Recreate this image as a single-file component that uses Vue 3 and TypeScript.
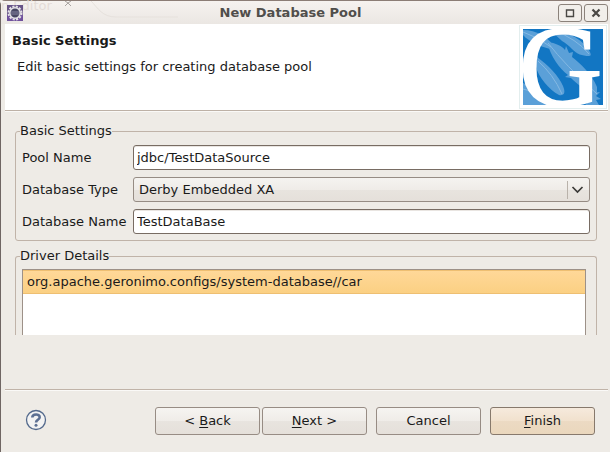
<script setup lang="ts">
import { ref } from 'vue'

const poolName = ref('jdbc/TestDataSource')
const databaseType = ref('Derby Embedded XA')
const databaseName = ref('TestDataBase')
const drivers = ref<string[]>(['org.apache.geronimo.configs/system-database//car'])
const selected = ref(0)
</script>

<template>
  <main class="dialog">
    <div class="titlebar">
      <span class="backdrop" aria-hidden="true">
        <span>n Editor</span>
        <svg width="120" height="18" viewBox="0 0 120 18" fill="none">
          <path d="M7 0l3 2 3-2M7 5l3-3 3 3" stroke="#a8a3a0" />
          <path d="M33 0C40 7 44 16 58 16H120" stroke="#e6e1dc" />
        </svg>
      </span>
      <svg class="app-icon" width="16" height="16" viewBox="0 0 16 16">
        <rect width="16" height="16" fill="#675387" />
        <rect y="10" width="16" height="6" fill="#70519c" />
        <circle cx="8" cy="8" r="6.5" fill="none" stroke="#e4e2e6" stroke-width="2" stroke-dasharray="2.1 1.3" />
        <circle cx="8" cy="8" r="5.2" fill="#484663" stroke="#e4e2e6" stroke-width="1.5" />
        <path d="M4 7h8M4 9h8" stroke="#8583a0" />
      </svg>
      <h1>New Database Pool</h1>
      <div class="window-buttons">
        <button type="button" aria-label="Maximize">
          <svg width="10" height="10" viewBox="0 0 10 10"><path d="M1.500 2H8.500V8.500H1.500Z" fill="none" stroke="#4a4845" stroke-width="1.400" /></svg>
        </button>
        <button type="button" aria-label="Close">
          <svg width="10" height="10" viewBox="0 0 10 10"><path d="M1.500 1.500L8.500 8.500M8.500 1.500L1.500 8.500" stroke="#4a4845" stroke-width="2.200" /></svg>
        </button>
      </div>
    </div>

    <header class="banner">
      <div class="intro">
        <h2>Basic Settings</h2>
        <p>Edit basic settings for creating database pool</p>
      </div>
      <svg class="logo" width="88" height="84" viewBox="0 0 88 84">
        <rect x=".5" y=".5" width="87" height="83" fill="#fff" stroke="#e3eeee" />
        <rect x="4" y="4" width="80" height="76" fill="#1276c3" />
        <g fill="#5ba0d8">
          <path d="M4 5C18 5 28 12 34 20L31 24C20 21 9 16 4 10Z" />
          <path d="M31 4C47 6 59 12 68 22C72 28 73 31 70 31C63 31 58 29 53 24C50 21 47 18 43 16C38 11 34 9 31 4Z" />
          <path d="M28 17C37 18 43 21 46 25L47 21L50 28L54 27L53 32C61 38 73 49 78 62L78 70C65 65 57 58 52 53L46 52L49 50C40 43 32 32 28 17Z" />
          <path d="M18 32C29 40 40 51 44 61C47 68 45 71 40 70C30 65 19 51 17 42Z" />
          <path d="M4 58C18 62 27 70 35 80H4Z" />
          <path d="M73 68L81 67L77 71L82 74L77 75L80 80H66L72 75L69 72Z" />
        </g>
        <path d="M4 7Q19 12 32 22M34 5Q58 14 70 29M29 18Q46 40 78 69M19 36Q34 49 43 69M4 64Q20 67 32 80" fill="none" stroke="#85b9e3" />
        <text x="0" y="80" class="letter">G</text>
      </svg>
    </header>

    <form class="body" @submit.prevent>
      <fieldset class="group settings">
        <legend>Basic Settings</legend>
        <label for="pool">Pool Name</label>
        <input id="pool" v-model="poolName" type="text" />
        <label for="type">Database Type</label>
        <div class="combo">
          <select id="type" v-model="databaseType">
            <option>Derby Embedded XA</option>
          </select>
          <svg width="24" height="18" viewBox="0 0 24 18" fill="none">
            <path d="M1.500 0V18" stroke="#b9b2aa" />
            <path d="M6.500 6L11.500 11L16.500 6" stroke="#3c3b38" stroke-width="1.700" />
          </svg>
        </div>
        <label for="name">Database Name</label>
        <input id="name" v-model="databaseName" type="text" />
      </fieldset>

      <fieldset class="group drivers">
        <legend>Driver Details</legend>
        <ul class="list" role="listbox" aria-label="Driver Details">
          <li
            v-for="(driver, i) in drivers"
            :key="driver"
            role="option"
            :aria-selected="i === selected"
            :class="{ selected: i === selected }"
            @click="selected = i"
          >{{ driver }}</li>
        </ul>
      </fieldset>
    </form>

    <footer class="actions">
      <button class="help" type="button" aria-label="Help">
        <svg width="22" height="22" viewBox="0 0 22 22">
          <circle cx="11" cy="11" r="9.500" fill="#f3f3f3" stroke="#53698c" stroke-width="1.300" />
          <path d="M7.300 8.600C7.300 4.600 14.700 4.400 14.700 8.200C14.700 10.700 11 10.800 11 13.400" fill="none" stroke="#5d7093" stroke-width="2.600" />
          <circle cx="11" cy="16.300" r="1.500" fill="#5d7093" />
        </svg>
      </button>
      <div class="nav">
        <button class="push" type="button">&lt; <u>B</u>ack</button>
        <button class="push" type="button"><u>N</u>ext &gt;</button>
      </div>
      <button class="push" type="button">Cancel</button>
      <button class="push primary" type="button"><u>F</u>inish</button>
    </footer>
  </main>
</template>

<style>
body {
  background: #eeebe6;
}
</style>

<style scoped>
.dialog {
  box-sizing: border-box;
  display: flex;
  flex-direction: column;
  min-height: 100vh;
  padding: 0 2px 0 4px;
  border-top: 1px solid #8c7d76;
  border-left: 1px solid #6f6663;
  border-top-left-radius: 5px;
  background: #eeebe6;
  color: #1a1a1a;
  font: 13px/18px "DejaVu Sans", sans-serif;
}

h1,
h2,
p,
ul {
  margin: 0;
  padding: 0;
}

button,
input,
select {
  box-sizing: border-box;
  font: inherit;
  color: inherit;
}

.titlebar {
  position: relative;
  display: flex;
  align-items: center;
  height: 23px;
  margin: 0 -2px 0 -4px;
  padding: 0 2px 0 6px;
  background: linear-gradient(#f6f2ef, #ebe7e3);
}

.backdrop {
  position: absolute;
  top: 0;
  left: 0;
  display: flex;
  height: 18px;
  color: #e4dcd8;
  line-height: 10px;
}

.backdrop span {
  width: 57px;
}

.app-icon {
  position: relative;
}

h1 {
  flex: 1;
  color: #504e4b;
  font-size: 13px;
  line-height: 20px;
  text-align: center;
}

.window-buttons {
  display: flex;
  gap: 2px;
}

.window-buttons button {
  display: flex;
  align-items: center;
  justify-content: center;
  width: 24px;
  height: 18px;
  padding: 0;
  border: 1px solid #8b827b;
  border-radius: 3px;
  background: #f1eeea;
}

.banner {
  display: flex;
  justify-content: space-between;
  height: 86px;
  border-bottom: 1px solid #bdb1a6;
  box-shadow: 0 1px #faf9f7;
  background: #fff;
}

.intro {
  padding: 8px 7px;
}

h2 {
  font-size: 13px;
  line-height: 18px;
}

.intro p {
  margin: 8px 5px;
}

.logo {
  margin: 1px 1px;
  overflow: visible;
}

.letter {
  fill: #fff;
  stroke: #fff;
  stroke-width: 2px;
  font: 115px "Liberation Serif", serif;
}

.body {
  flex: 1;
  padding: 11px 11px 0 10px;
}

.group {
  min-width: 0;
  margin: 0;
  padding: 0 6px;
  border: 1px solid #c0b3a8;
  border-radius: 3px;
}

.group legend {
  margin-left: -2px;
  padding: 0;
}

.settings {
  display: grid;
  grid-template-columns: 104px 1fr;
  align-items: center;
  gap: 7px;
  padding-top: 5px;
  padding-bottom: 6px;
}

.settings label {
  white-space: nowrap;
}

input {
  width: 100%;
  height: 25px;
  padding: 0 3px;
  border: 1px solid #786c63;
  border-radius: 3px;
  outline: 0;
  background: #fff;
  box-shadow: inset 0 1px #e9e5e1;
}

.combo {
  display: grid;
  align-items: center;
}

.combo select,
.combo svg {
  grid-area: 1 / 1;
}

.combo svg {
  justify-self: end;
  pointer-events: none;
}

select {
  width: 100%;
  height: 25px;
  padding: 0 28px 0 5px;
  appearance: none;
  border: 1px solid #968c84;
  border-radius: 3px;
  background: linear-gradient(#f5f3f0, #efece8 50%, #e8e4df 51%, #e5e0da);
}

.drivers {
  margin-top: 6px;
  padding-right: 10px;
  border-bottom: 0;
  border-bottom-left-radius: 0;
  border-bottom-right-radius: 0;
}

.list {
  height: 65px;
  margin-top: 4px;
  border: 1px solid #9d9188;
  border-bottom: 0;
  background: #fff;
  list-style: none;
}

.list li {
  padding: 2px 4px;
}

.list .selected {
  border-top: 1px solid #eebf72;
  border-bottom: 1px solid #eebf72;
  background: linear-gradient(#ffd898, #fbd083);
}

.actions {
  display: flex;
  align-items: center;
  gap: 9px;
  padding: 17px 13px 17px 20px;
  border-top: 1px solid #c0b3a8;
  box-shadow: inset 0 1px #faf9f7;
}

.help {
  display: flex;
  margin-right: auto;
  padding: 0 0 3px;
  border: 0;
  background: none;
}

.nav {
  display: flex;
  gap: 2px;
}

.push {
  width: 105px;
  height: 28px;
  padding: 0;
  border: 1px solid #978c84;
  border-radius: 3px;
  background: linear-gradient(#f6f4f1, #efece8 50%, #e8e4df 51%, #e5e0da);
}

.push u {
  text-underline-offset: 2px;
}

.primary {
  border-color: #87796c;
  background: linear-gradient(#f6eadd, #f1e1cd 50%, #ecdac3 51%, #ead7bd);
}
</style>
